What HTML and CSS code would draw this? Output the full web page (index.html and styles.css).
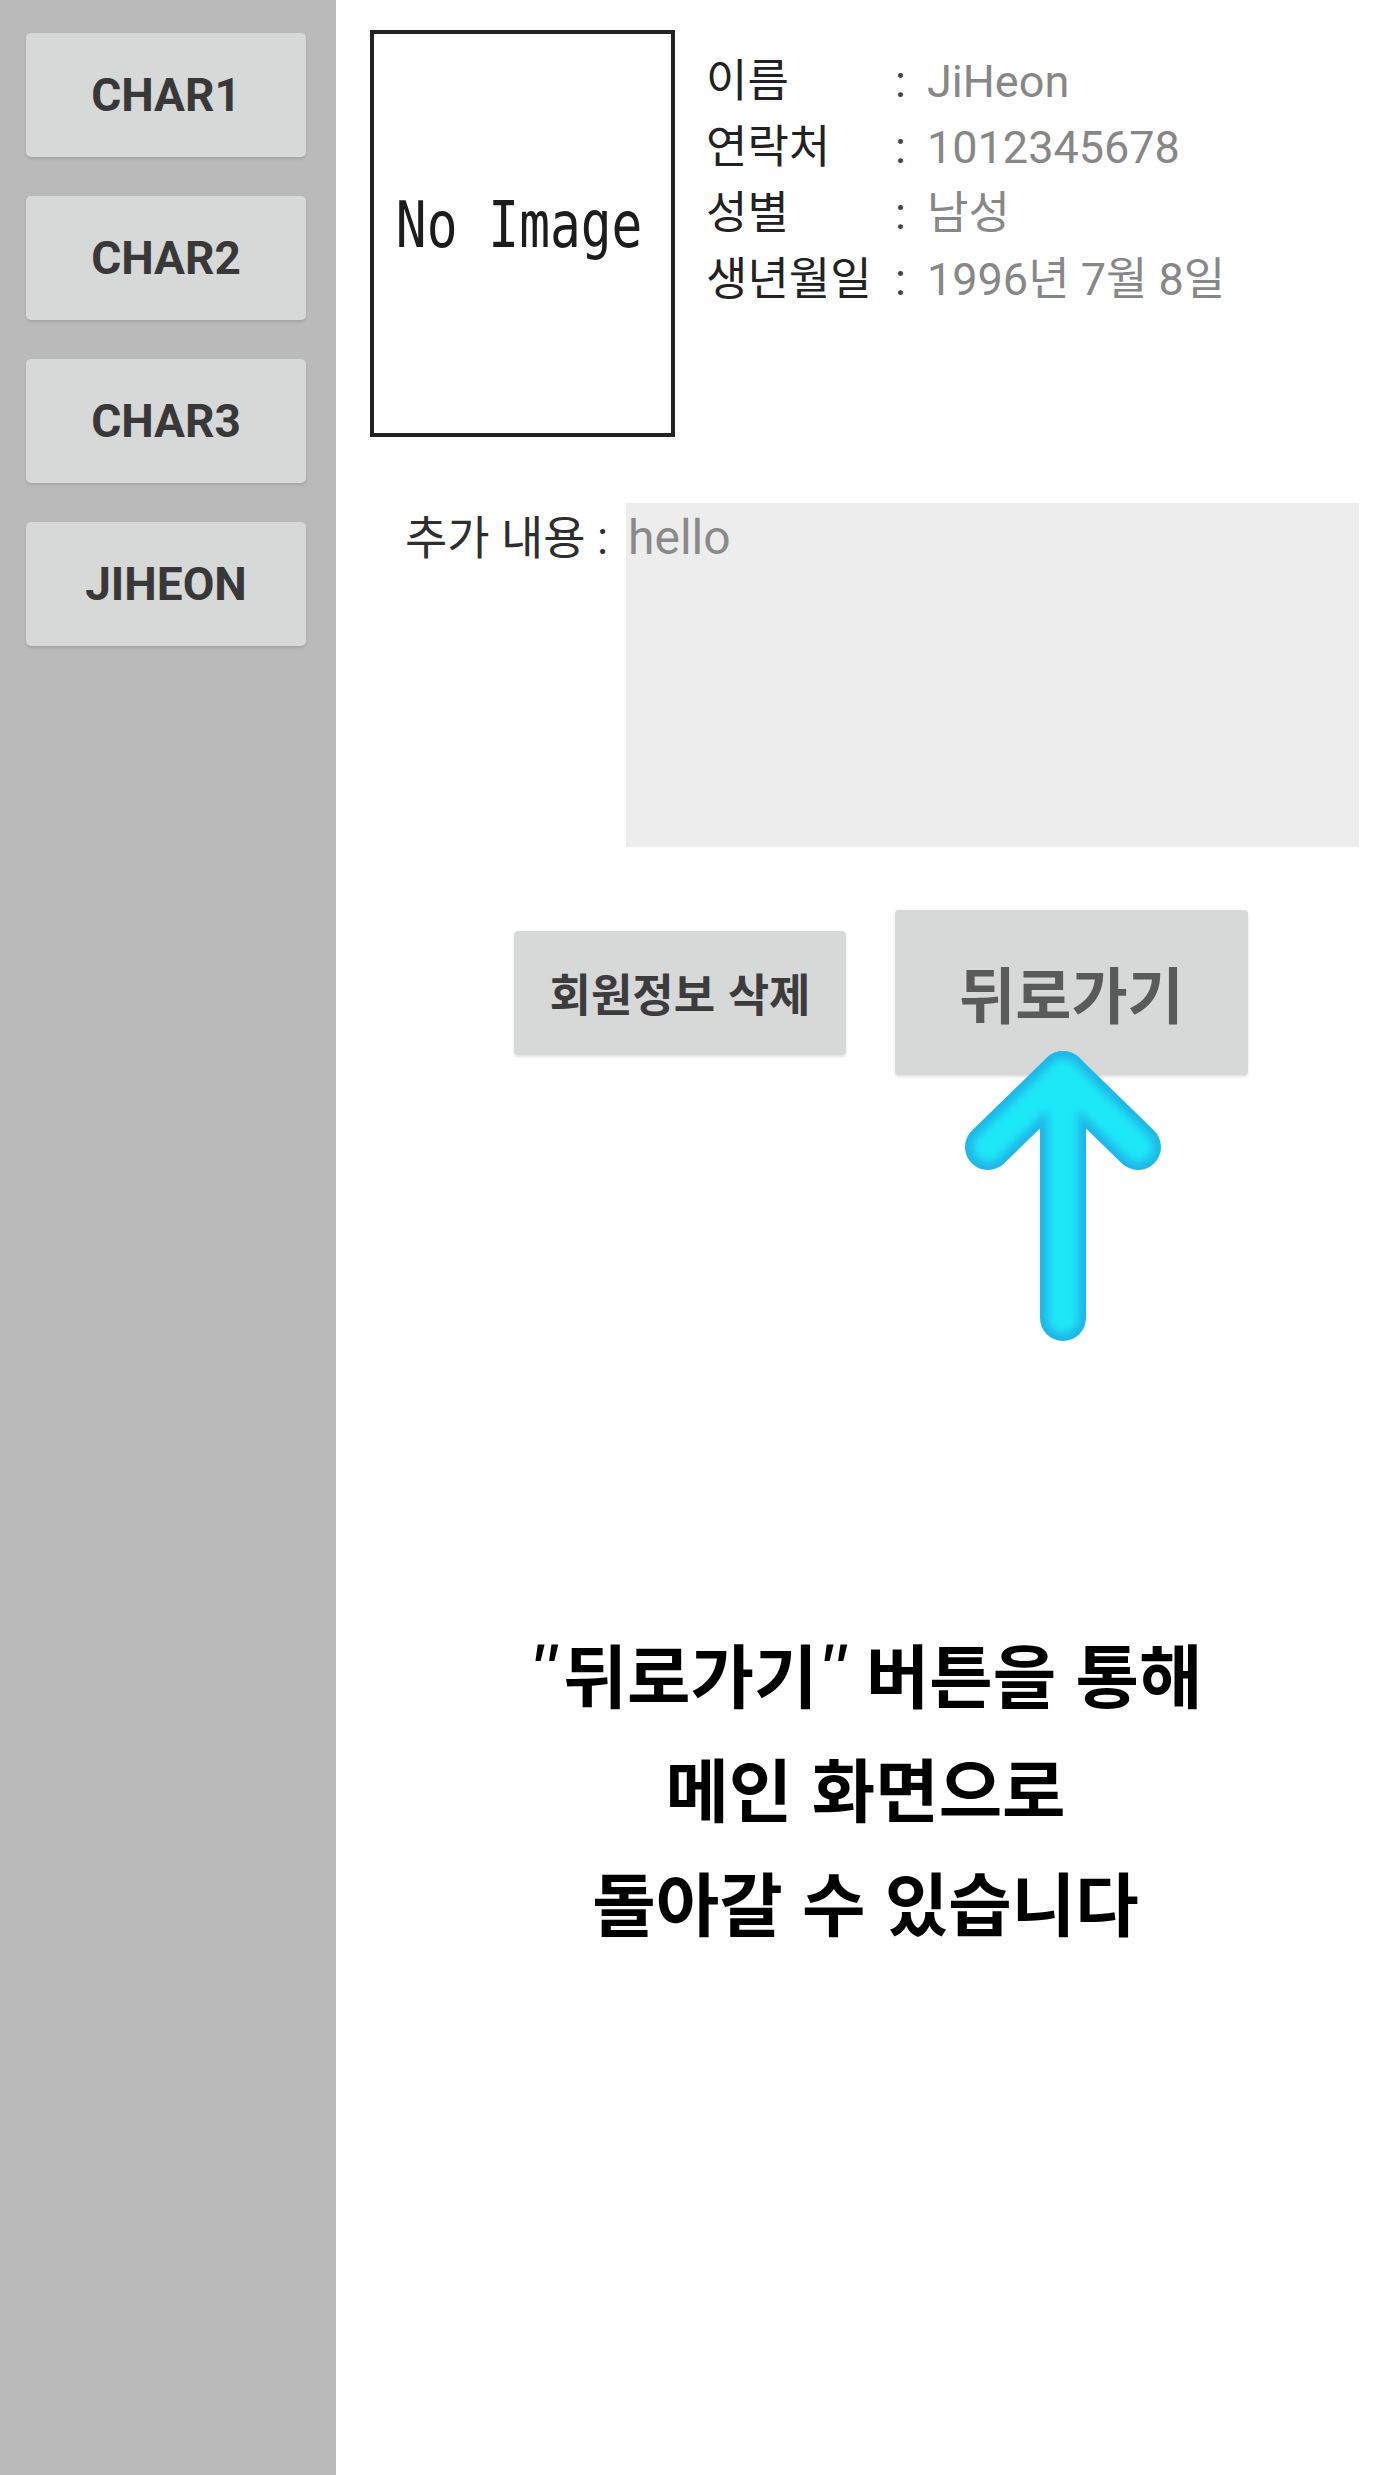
FILE: index.html
```html
<!DOCTYPE html>
<html lang="ko">
<head>
<meta charset="utf-8">
<title>회원정보</title>
<link rel="stylesheet" href="styles.css">
</head>
<body>
<div class="app">
  <aside class="sidebar">
    <button class="side-btn">CHAR1</button>
    <button class="side-btn">CHAR2</button>
    <button class="side-btn">CHAR3</button>
    <button class="side-btn">JIHEON</button>
  </aside>
  <main class="main">
    <section class="profile">
      <div class="photo"><span class="photo-text">No Image</span></div>
      <div class="info">
        <span class="label">이름</span><span class="colon">:</span><span class="value">JiHeon</span>
        <span class="label">연락처</span><span class="colon">:</span><span class="value">1012345678</span>
        <span class="label">성별</span><span class="colon">:</span><span class="value">남성</span>
        <span class="label">생년월일</span><span class="colon">:</span><span class="value">1996년 7월 8일</span>
      </div>
    </section>
    <section class="extra">
      <div class="extra-label">추가 내용 :</div>
      <div class="extra-box">hello</div>
    </section>
    <section class="actions">
      <button class="btn btn-delete">회원정보 삭제</button>
      <button class="btn btn-back">뒤로가기</button>
    </section>
    <svg class="arrow" width="200" height="296" viewBox="0 0 200 296">
      <defs>
        <filter id="soft" x="-20%" y="-20%" width="140%" height="140%">
          <feGaussianBlur stdDeviation="4"/>
        </filter>
      </defs>
      <g fill="none" stroke-linecap="round" stroke-linejoin="round">
        <polyline points="25,99 100,26 175,99" stroke="#20b6e8" stroke-width="46"/>
        <line x1="100" y1="26" x2="100" y2="270" stroke="#20b6e8" stroke-width="46"/>
        <g filter="url(#soft)">
          <polyline points="25,99 100,26 175,99" stroke="#1ee8f8" stroke-width="30"/>
          <line x1="100" y1="26" x2="100" y2="270" stroke="#1ee8f8" stroke-width="30"/>
        </g>
      </g>
    </svg>
    <p class="caption">
      <span class="line"><span class="q q-open">"</span>뒤로가기<span class="q q-close">"</span> 버튼을 통해</span>
      <span class="line">메인 화면으로</span>
      <span class="line">돌아갈 수 있습니다</span>
    </p>
  </main>
</div>
</body>
</html>
```
FILE: styles.css
```css
html, body {
  margin: 0;
  padding: 0;
  background: #ffffff;
}

body {
  font-family: Roboto, "Noto Sans CJK KR", sans-serif;
}

.app {
  display: flex;
  min-height: 2475px;
}

.sidebar {
  width: 336px;
  flex: none;
  background: #bababa;
  box-sizing: border-box;
  padding: 33px 30px 0 26px;
  display: flex;
  flex-direction: column;
  gap: 39px;
}

.side-btn {
  height: 124px;
  width: 280px;
  border: none;
  border-radius: 5px;
  background: #d7d8d8;
  box-shadow: 0 2px 3px rgba(0, 0, 0, 0.12);
  font-family: Roboto, sans-serif;
  font-weight: 700;
  font-size: 46px;
  color: #383838;
  padding: 0;
  margin: 0;
}

.main {
  flex: 1;
  position: relative;
  padding: 30px 0 0 34px;
}

.profile {
  display: flex;
  align-items: flex-start;
}

.photo {
  width: 305px;
  height: 407px;
  box-sizing: border-box;
  border: 4px solid #222222;
  display: flex;
  align-items: center;
  justify-content: center;
}

.photo-text {
  display: inline-block;
  font-family: "DejaVu Sans Mono", monospace;
  font-size: 64px;
  color: #1c1c1c;
  white-space: pre;
  transform: scaleX(0.8);
  margin-top: -18px;
  margin-left: -6px;
}

.info {
  margin-left: 31px;
  padding-top: 19px;
  display: grid;
  grid-template-columns: 189px 32px auto;
  line-height: 66px;
  font-size: 45px;
}

.label {
  color: #222222;
  white-space: nowrap;
}

.colon {
  color: #444444;
}

.value {
  color: #878787;
  white-space: nowrap;
}

.extra {
  display: flex;
  margin-top: 66px;
  margin-left: 35px;
}

.extra-label {
  width: 221px;
  flex: none;
  font-size: 46px;
  line-height: 52px;
  padding-top: 9px;
  color: #2e2e2e;
  white-space: nowrap;
}

.extra-box {
  width: 733px;
  height: 344px;
  box-sizing: border-box;
  background: #ededed;
  padding: 9px 0 0 2px;
  font-size: 48px;
  line-height: 52px;
  color: #8a8a8a;
}

.actions {
  display: flex;
  align-items: center;
  gap: 49px;
  margin-top: 63px;
  margin-left: 144px;
}

.btn {
  border: none;
  border-radius: 4px;
  background: #d7d8d8;
  box-shadow: 0 2px 3px rgba(0, 0, 0, 0.12);
  font-family: "Noto Sans CJK KR", sans-serif;
  font-weight: 700;
  padding: 0;
  margin: 0;
}

.btn-delete {
  width: 332px;
  height: 124px;
  font-size: 45px;
  color: #3c3c3c;
}

.btn-back {
  width: 353px;
  height: 165px;
  font-size: 61px;
  color: #5a5a5a;
}

.arrow {
  position: absolute;
  left: 627px;
  top: 1048px;
}

.caption {
  margin: 539px 0 0 -34px;
  text-align: center;
  font-family: "Noto Sans CJK KR", sans-serif;
  font-weight: 700;
  font-size: 69px;
  line-height: 114px;
  color: #000000;
}

.line {
  display: block;
}

.q {
  font-family: "Liberation Sans", sans-serif;
  font-style: italic;
  font-weight: 400;
  font-size: 1.1em;
  vertical-align: 0.08em;
}

.q-open {
  margin-right: 8px;
}

.q-close {
  margin-left: 0;
  margin-right: 2px;
}
```
